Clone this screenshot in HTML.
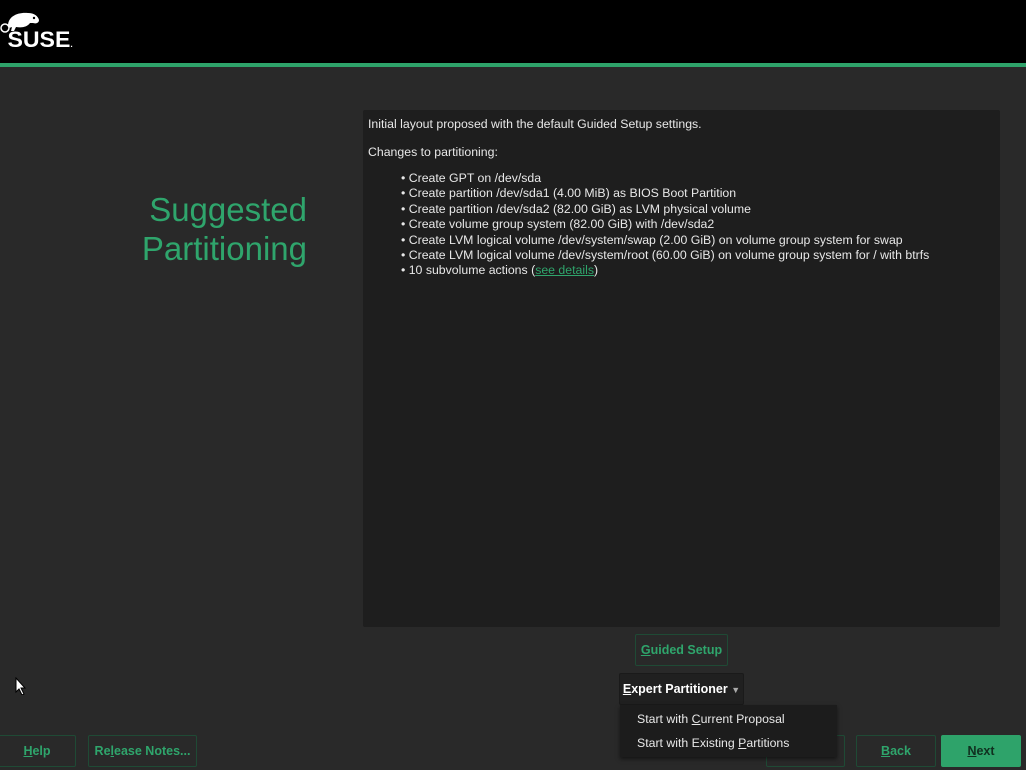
<!DOCTYPE html>
<html><head><meta charset="utf-8"><style>
*{margin:0;padding:0;box-sizing:border-box}
body{width:1026px;height:770px;background:#292929;font-family:"Liberation Sans",sans-serif;position:relative;overflow:hidden;color:#e6e6e6}
.hdr{position:absolute;left:0;top:0;width:1026px;height:63px;background:#000}
.line{position:absolute;left:0;top:63px;width:1026px;height:4px;background:#2ea36a}
.logo{position:absolute;left:9px;top:27px;color:#fff;font-weight:bold;font-size:22px;letter-spacing:0px;transform:scaleX(1.05)}
.title{position:absolute;right:719px;top:190px;text-align:right;color:#2fa56c;font-size:33px;line-height:39px}
.panel{position:absolute;left:363px;top:110px;width:637px;height:517px;background:#1e1e1e;border-radius:2px;font-size:12.3px;color:#e8e8e8}
.panel p{position:absolute;left:5px;white-space:nowrap}
.panel ul{position:absolute;left:38px;top:61px;list-style:none;line-height:15.4px}
a{color:#2fa56c;text-decoration:underline}
.btn{position:absolute;height:32px;border:1px solid #1f4a35;border-radius:2px;color:#2fa56c;font-weight:bold;font-size:12.5px;display:flex;align-items:center;justify-content:center}
u{text-decoration:underline}
.menu{position:absolute;left:620px;top:705px;width:217px;height:52px;background:#1c1c1c;font-size:12.3px;color:#e8e8e8;box-shadow:0 2px 4px #0008}
.menu div{position:absolute;left:17px;white-space:nowrap}
</style></head><body>
<div class="hdr"></div><div class="line"></div>
<svg style="position:absolute;left:0;top:8px" width="45" height="26" viewBox="0 0 45 26"><path d="M8 18 C8 8 18 4 28 5 C34 5 38 8 39 12 C39 15 36 16 33 15 L30 15 C27 19 22 20 16 19 L14 23 L11 23 L12 19 C10 20 8 20 8 18Z" fill="#fff"/><circle cx="5" cy="20" r="4" fill="none" stroke="#fff" stroke-width="1.5"/><circle cx="34" cy="10" r="1.2" fill="#000"/></svg>
<div class="logo">SUSE<span style="font-size:8px">.</span></div>
<div class="title">Suggested<br>Partitioning</div>
<div class="panel">
<p style="top:7px">Initial layout proposed with the default Guided Setup settings.</p>
<p style="top:35px">Changes to partitioning:</p>
<ul>
<li>• Create GPT on /dev/sda</li>
<li>• Create partition /dev/sda1 (4.00 MiB) as BIOS Boot Partition</li>
<li>• Create partition /dev/sda2 (82.00 GiB) as LVM physical volume</li>
<li>• Create volume group system (82.00 GiB) with /dev/sda2</li>
<li>• Create LVM logical volume /dev/system/swap (2.00 GiB) on volume group system for swap</li>
<li>• Create LVM logical volume /dev/system/root (60.00 GiB) on volume group system for / with btrfs</li>
<li>• 10 subvolume actions (<a>see details</a>)</li>
</ul></div>
<div class="btn" style="left:635px;top:634px;width:93px"><span><u>G</u>uided Setup</span></div>
<div class="btn" style="left:619px;top:673px;width:125px;background:#202020;border-color:#1a1a1a;color:#fff"><span><u>E</u>xpert Partitioner <span style="color:#aaa;font-size:9px">▼</span></span></div>
<div class="btn" style="left:-2px;top:735px;width:78px"><span><u>H</u>elp</span></div>
<div class="btn" style="left:88px;top:735px;width:109px"><span>Re<u>l</u>ease Notes...</span></div>
<div class="btn" style="left:766px;top:735px;width:79px"></div>
<div class="btn" style="left:856px;top:735px;width:80px"><span><u>B</u>ack</span></div>
<div class="btn" style="left:941px;top:735px;width:80px;background:#2ea36a;border-color:#2ea36a;color:#123"><span style="color:#10301f"><u>N</u>ext</span></div>
<div class="menu"><div style="top:7px">Start with <u>C</u>urrent Proposal</div><div style="top:31px">Start with Existing <u>P</u>artitions</div></div>
<svg style="position:absolute;left:15px;top:677px" width="12" height="18" viewBox="0 0 12 18"><path d="M1 1 L1 15 L4 12 L7 18 L9 17 L6 11 L10 11 Z" fill="#fff" stroke="#000" stroke-width="1"/></svg>
</body></html>
